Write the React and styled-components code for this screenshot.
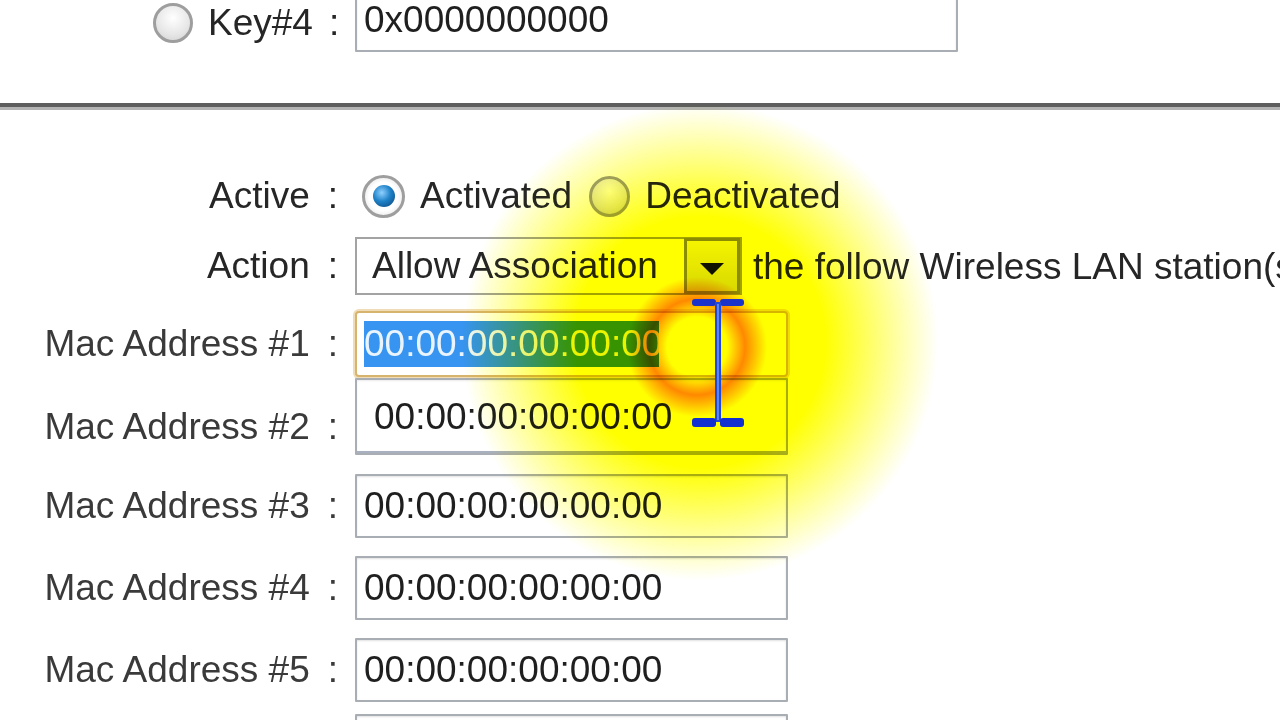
import React from 'react';
import styled, { createGlobalStyle } from 'styled-components';

const GlobalStyle = createGlobalStyle`
  html, body {
    margin: 0;
    padding: 0;
    background: #ffffff;
    overflow: hidden;
  }
  body {
    font-family: "Liberation Sans", Arial, sans-serif;
  }
`;

const Page = styled.div`
  position: relative;
  width: 1280px;
  height: 720px;
  overflow: hidden;
  background: #ffffff;
  color: #262626;
  font-size: 37px;
  white-space: nowrap;
`;

const Row = styled.div`
  display: flex;
  align-items: center;
  height: ${(p) => p.$h}px;
  margin-top: ${(p) => p.$mt || 0}px;
`;

const Label = styled.div`
  box-sizing: border-box;
  width: 355px;
  flex: none;
  display: flex;
  justify-content: flex-end;
  align-items: center;
  gap: 14px;
  padding-right: 17px;
  padding-top: ${(p) => p.$drop || 0}px;
  color: ${(p) => (p.$soft ? '#3a3a3a' : '#262626')};
`;

const Colon = styled.span`
  margin-left: 4px;
`;

const Field = styled.div`
  box-sizing: border-box;
  width: ${(p) => p.$w || 433}px;
  height: 100%;
  flex: none;
  display: flex;
  align-items: center;
  padding-left: ${(p) => p.$pad || 7}px;
  background: #ffffff;
  border: 2px solid ${(p) => (p.$focus ? '#d7b46e' : '#a9adb4')};
  border-radius: ${(p) => (p.$focus ? 4 : 1)}px;
  box-shadow: ${(p) =>
    p.$focus
      ? '0 0 0 2px rgba(222, 178, 96, 0.45)'
      : p.$double
      ? 'inset 0 -8px 0 -6px #a9b0c0, inset 0 1px 2px rgba(0,0,0,0.08)'
      : 'inset 0 1px 2px rgba(0,0,0,0.12)'};
  color: #1f1f1f;
  overflow: hidden;
`;

const Selected = styled.span`
  background: #3794f0;
  color: #eaf4ff;
  line-height: 46px;
  width: 295px;
  overflow: hidden;
  display: inline-block;
`;

const Divider = styled.div`
  margin-top: 51px;
  height: 4px;
  background: #5e5e5e;
  border-bottom: 3px solid #b4b4b4;
`;

const RadioGroup = styled.div`
  display: flex;
  align-items: center;
  padding-left: 7px;
`;

const RadioDot = styled.span`
  box-sizing: border-box;
  width: ${(p) => p.$size || 42}px;
  height: ${(p) => p.$size || 42}px;
  flex: none;
  border-radius: 50%;
  border: 3px solid #9e9e9e;
  display: flex;
  align-items: center;
  justify-content: center;
  background: ${(p) =>
    p.$on
      ? 'radial-gradient(circle, #ffffff 55%, #d8d8d8 100%)'
      : 'radial-gradient(circle at 50% 35%, #ffffff 0%, #e6e6e6 60%, #cfcfcf 100%)'};
  margin-right: ${(p) => p.$mr || 15}px;

  &::after {
    content: '';
    display: ${(p) => (p.$on ? 'block' : 'none')};
    width: 22px;
    height: 22px;
    border-radius: 50%;
    background: radial-gradient(circle at 40% 35%, #8fd0ff 0%, #1f82c8 45%, #0b3f73 100%);
  }
`;

const RadioText = styled.span`
  margin-right: 17px;
`;

const Select = styled.div`
  box-sizing: border-box;
  width: 387px;
  height: 58px;
  display: flex;
  align-items: center;
  justify-content: space-between;
  padding-left: 15px;
  border: 2px solid #a3a3a3;
  background: #ffffff;
  flex: none;
`;

const DropButton = styled.span`
  box-sizing: border-box;
  width: 56px;
  height: 56px;
  border: 3px solid #8c8c8c;
  background: linear-gradient(#f4f4f4, #d9d9d9);
  display: flex;
  align-items: center;
  justify-content: center;

  &::after {
    content: '';
    margin-top: 6px;
    border-left: 12px solid transparent;
    border-right: 12px solid transparent;
    border-top: 12px solid #111111;
  }
`;

const After = styled.span`
  margin-left: 11px;
  padding-top: 2px;
`;

const KeyLabel = styled.div`
  box-sizing: border-box;
  width: 355px;
  flex: none;
  display: flex;
  align-items: center;
  padding-left: 153px;
  padding-top: 6px;
`;

const KeyColon = styled.span`
  margin-left: 16px;
`;

const Glow = styled.div`
  position: absolute;
  inset: 0;
  pointer-events: none;
  mix-blend-mode: multiply;
  background:
    radial-gradient(circle at 697px 347px, rgba(255,255,255,0) 30px, rgba(255,130,0,0.95) 48px, rgba(255,170,0,0) 70px),
    radial-gradient(circle at 700px 342px, #ffff00 0, #ffff00 125px, rgba(255,255,40,0.55) 185px, rgba(255,255,255,0) 238px);
`;

const Cursor = styled.svg`
  position: absolute;
  left: 688px;
  top: 296px;
  pointer-events: none;
`;

const MacText = styled.span`
  margin-top: ${(p) => p.$shift || 0}px;
`;

const macs = [
  { n: 1, mt: 16, h: 66, focus: true },
  { n: 2, mt: 1, h: 77, double: true, pad: 17, drop: 20 },
  { n: 3, mt: 19, h: 64 },
  { n: 4, mt: 18, h: 64 },
  { n: 5, mt: 18, h: 64 },
  { n: 6, mt: 12, h: 64 },
];

export default function App() {
  return (
    <>
      <GlobalStyle />
      <Page>
        <Row $h={64} $mt={-12}>
          <KeyLabel>
            <RadioDot $size={40} $mr={15} />
            Key#4
            <KeyColon>:</KeyColon>
          </KeyLabel>
          <Field $w={603}>0x0000000000</Field>
        </Row>

        <Divider />

        <Row $h={44} $mt={64}>
          <Label>
            <span>Active</span>
            <Colon>:</Colon>
          </Label>
          <RadioGroup>
            <RadioDot $on $size={43} />
            <RadioText>Activated</RadioText>
            <RadioDot $size={41} />
            <RadioText>Deactivated</RadioText>
          </RadioGroup>
        </Row>

        <Row $h={58} $mt={19}>
          <Label>
            <span>Action</span>
            <Colon>:</Colon>
          </Label>
          <Select>
            <span>Allow Association</span>
            <DropButton />
          </Select>
          <After>the follow Wireless LAN station(s)</After>
        </Row>

        {macs.map((m) => (
          <Row key={m.n} $h={m.h} $mt={m.mt}>
            <Label $soft $drop={m.drop}>
              <span>Mac Address #{m.n}</span>
              <Colon>:</Colon>
            </Label>
            <Field $focus={m.focus} $double={m.double} $pad={m.pad}>
              {m.focus ? (
                <Selected>00:00:00:00:00:00</Selected>
              ) : (
                <MacText>00:00:00:00:00:00</MacText>
              )}
            </Field>
          </Row>
        ))}

        <Glow />
        <Cursor width="60" height="136" viewBox="0 0 60 136">
          <rect x="4" y="3" width="24" height="7" rx="3" fill="#1b33c9" />
          <rect x="32" y="3" width="24" height="7" rx="3" fill="#1b33c9" />
          <rect x="27" y="6" width="6" height="120" fill="#2448d6" />
          <rect x="29" y="8" width="2" height="116" fill="#5a86ee" />
          <rect x="4" y="122" width="24" height="9" rx="3" fill="#1230d0" />
          <rect x="32" y="122" width="24" height="9" rx="3" fill="#1230d0" />
        </Cursor>
      </Page>
    </>
  );
}
